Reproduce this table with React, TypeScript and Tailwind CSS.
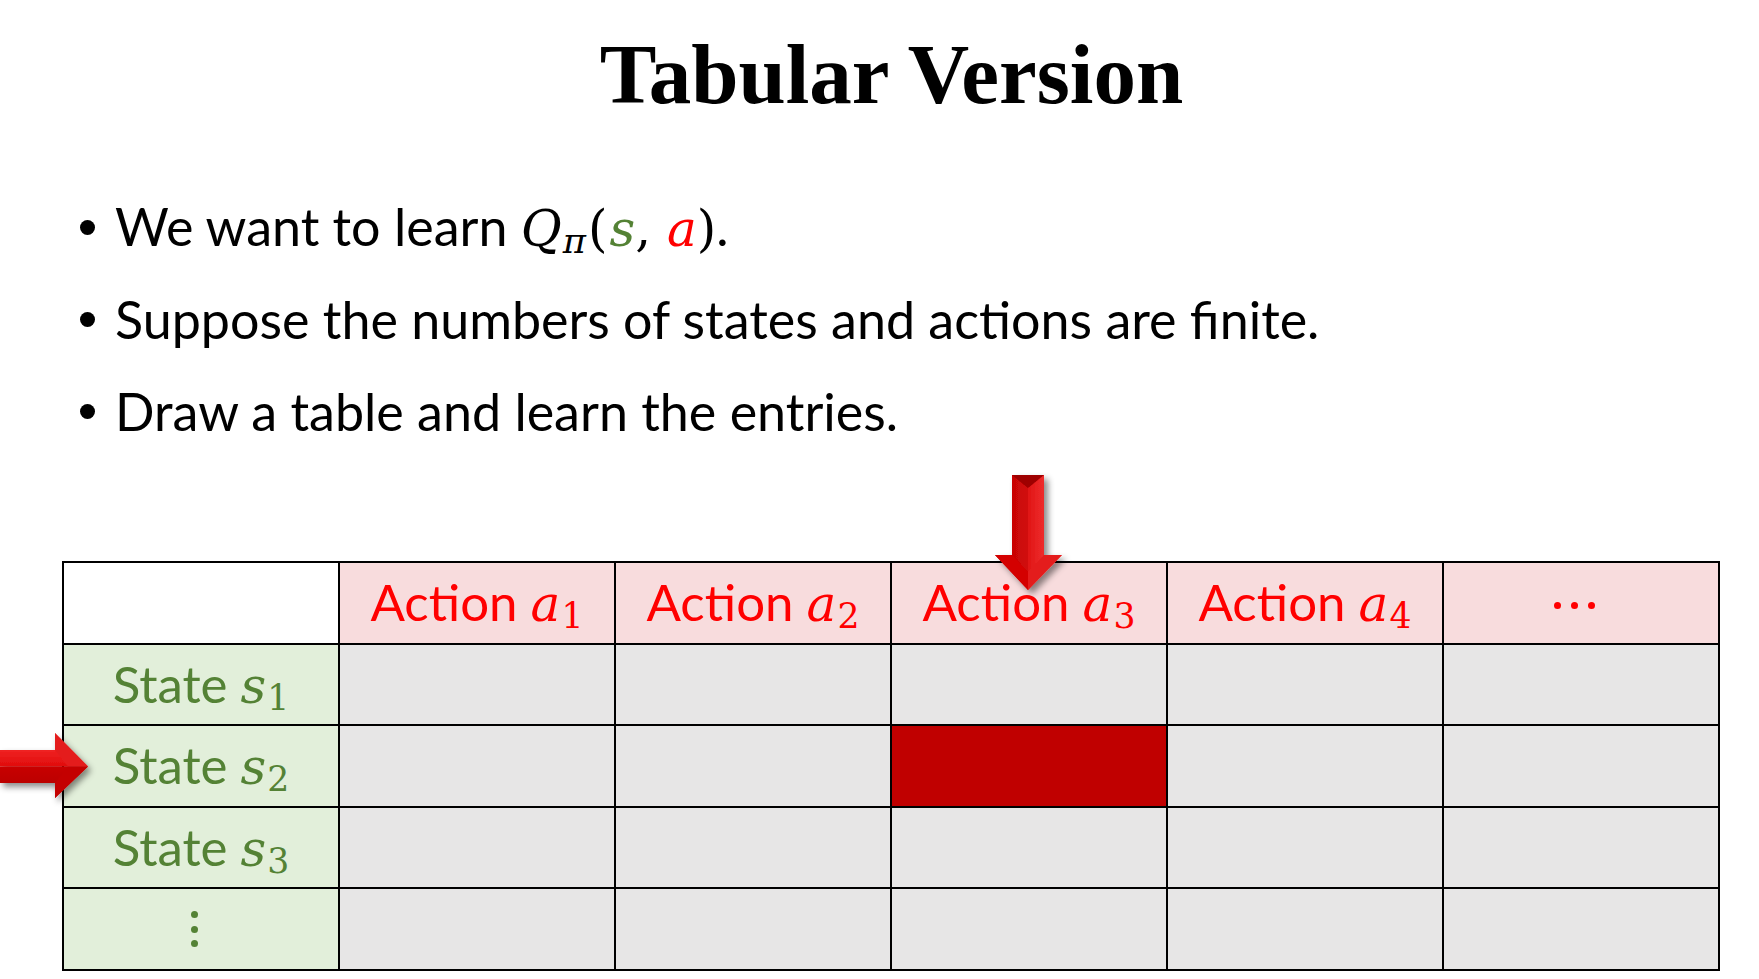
import React from "react";

const sans = "font-['Lato','Open_Sans',sans-serif]";
const mathFont = "font-['DejaVu_Serif','Liberation_Serif',serif]";
const math = `${mathFont} italic`;

function Sub({ children }: { children: React.ReactNode }) {
  return (
    <sub className={`${mathFont} not-italic text-[0.68em] bottom-[-0.2em] ml-[1px]`}>{children}</sub>
  );
}

function Bullet({ children }: { children: React.ReactNode }) {
  return (
    <li className="flex items-center h-[92px]">
      <span className="w-[15px] h-[15px] rounded-full bg-black mr-[20px] shrink-0" />
      <span className="leading-none">{children}</span>
    </li>
  );
}

function ActionHead({ n }: { n: string }) {
  return (
    <div className={`h-[79.6px] bg-[#f8dcdd] flex items-center justify-center text-[#ff0000] ${sans} text-[51px]`}>
      <span className="leading-none">
        Action <span className={`${math} text-[50px]`}>a</span>
        <Sub>{n}</Sub>
      </span>
    </div>
  );
}

function StateHead({ n }: { n: string }) {
  return (
    <div className={`h-[79.6px] bg-[#e2efda] flex items-center justify-center text-[#548235] ${sans} text-[51px]`}>
      <span className="leading-none">
        State <span className={`${math} text-[50px]`}>s</span>
        <Sub>{n}</Sub>
      </span>
    </div>
  );
}

function Empty({ red = false }: { red?: boolean }) {
  return <div className={`h-[79.6px] ${red ? "bg-[#c00000]" : "bg-[#e7e6e6]"}`} />;
}

function Dot({ color }: { color: string }) {
  return <span className={`w-[7px] h-[7px] rounded-full ${color}`} />;
}

function DownArrow() {
  return (
    <svg className="absolute left-[985px] top-[468px]" width="95" height="135" viewBox="0 0 95 135">
      <defs>
        <filter id="dsh" x="-30%" y="-30%" width="160%" height="160%">
          <feDropShadow dx="4" dy="4" stdDeviation="3" floodColor="#000" floodOpacity="0.45" />
        </filter>
        <linearGradient id="dl" x1="0" x2="1" y1="0" y2="0">
          <stop offset="0" stopColor="#c00000" />
          <stop offset="1" stopColor="#d10a0a" />
        </linearGradient>
        <linearGradient id="dr" x1="0" x2="1" y1="0" y2="0">
          <stop offset="0" stopColor="#e01515" />
          <stop offset="1" stopColor="#ff4747" />
        </linearGradient>
      </defs>
      <g filter="url(#dsh)">
        <polygon points="27,7 43,7 43,122 10,87 27,87" fill="url(#dl)" />
        <polygon points="43,7 59,7 59,87 77,87 43,122" fill="url(#dr)" />
        <polygon points="27,7 59,7 43,20" fill="#9e0000" />
        <polygon points="10,87 27,87 43,104 43,122" fill="#d40000" />
        <polygon points="77,87 59,87 43,104 43,122" fill="#e41e1e" />
      </g>
    </svg>
  );
}

function RightArrow() {
  return (
    <svg className="absolute left-0 top-[725px]" width="105" height="85" viewBox="0 0 105 85">
      <defs>
        <filter id="rsh" x="-30%" y="-30%" width="160%" height="160%">
          <feDropShadow dx="3" dy="4" stdDeviation="3" floodColor="#000" floodOpacity="0.45" />
        </filter>
        <linearGradient id="rt" x1="0" x2="0" y1="0" y2="1">
          <stop offset="0" stopColor="#ff3a3a" />
          <stop offset="1" stopColor="#e00c0c" />
        </linearGradient>
        <linearGradient id="rb" x1="0" x2="0" y1="0" y2="1">
          <stop offset="0" stopColor="#c80000" />
          <stop offset="1" stopColor="#b00000" />
        </linearGradient>
      </defs>
      <g filter="url(#rsh)">
        <polygon points="0,25 55,25 55,8 88,41.5 0,41.5" fill="url(#rt)" />
        <polygon points="0,41.5 88,41.5 55,73 55,58 0,58" fill="url(#rb)" />
        <polygon points="55,8 55,25 68,41.5 88,41.5" fill="#e41e1e" />
        <polygon points="55,73 55,58 68,41.5 88,41.5" fill="#c40000" />
      </g>
    </svg>
  );
}

export default function App() {
  return (
    <div className="relative w-[1759px] h-[979px] bg-white overflow-hidden">
      <h1 className="pt-[32px] pl-[24px] text-center font-['Liberation_Serif',serif] font-bold text-[85px] leading-none text-black">
        Tabular Version
      </h1>

      <ul className={`mt-[64px] ml-[80px] ${sans} text-[52px] text-black`}>
        <Bullet>
          We want to learn{" "}
          <span className={`${math} text-[50px]`}>Q</span>
          <Sub>
            <span className="italic">π</span>
          </Sub>
          <span className={`${mathFont} text-[50px] ml-[2px]`}>(</span>
          <span className={`${math} text-[50px] text-[#548235] ml-[2px]`}>s</span>
          <span className={`${mathFont} text-[50px]`}>, </span>
          <span className={`${math} text-[50px] text-[#ff0000]`}>a</span>
          <span className={`${mathFont} text-[50px]`}>)</span>.
        </Bullet>
        <Bullet>Suppose the numbers of states and actions are finite.</Bullet>
        <Bullet>Draw a table and learn the entries.</Bullet>
      </ul>

      <div className="mt-[104px] ml-[62px] w-fit grid grid-cols-[repeat(6,274px)] gap-[2px] p-[2px] bg-black">
        <div className="h-[79.6px] bg-white" />
        <ActionHead n="1" />
        <ActionHead n="2" />
        <ActionHead n="3" />
        <ActionHead n="4" />
        <div className="h-[79.6px] bg-[#f8dcdd] flex items-center justify-center gap-[10px] pr-[14px] pt-[6px]">
          <Dot color="bg-[#ff0000]" />
          <Dot color="bg-[#ff0000]" />
          <Dot color="bg-[#ff0000]" />
        </div>

        <StateHead n="1" />
        <Empty />
        <Empty />
        <Empty />
        <Empty />
        <Empty />

        <StateHead n="2" />
        <Empty />
        <Empty />
        <Empty red />
        <Empty />
        <Empty />

        <StateHead n="3" />
        <Empty />
        <Empty />
        <Empty />
        <Empty />
        <Empty />

        <div className="h-[79.6px] bg-[#e2efda] flex flex-col items-center justify-center gap-[7.5px] pr-[14px]">
          <Dot color="bg-[#548235]" />
          <Dot color="bg-[#548235]" />
          <Dot color="bg-[#548235]" />
        </div>
        <Empty />
        <Empty />
        <Empty />
        <Empty />
        <Empty />
      </div>

      <DownArrow />
      <RightArrow />
    </div>
  );
}
